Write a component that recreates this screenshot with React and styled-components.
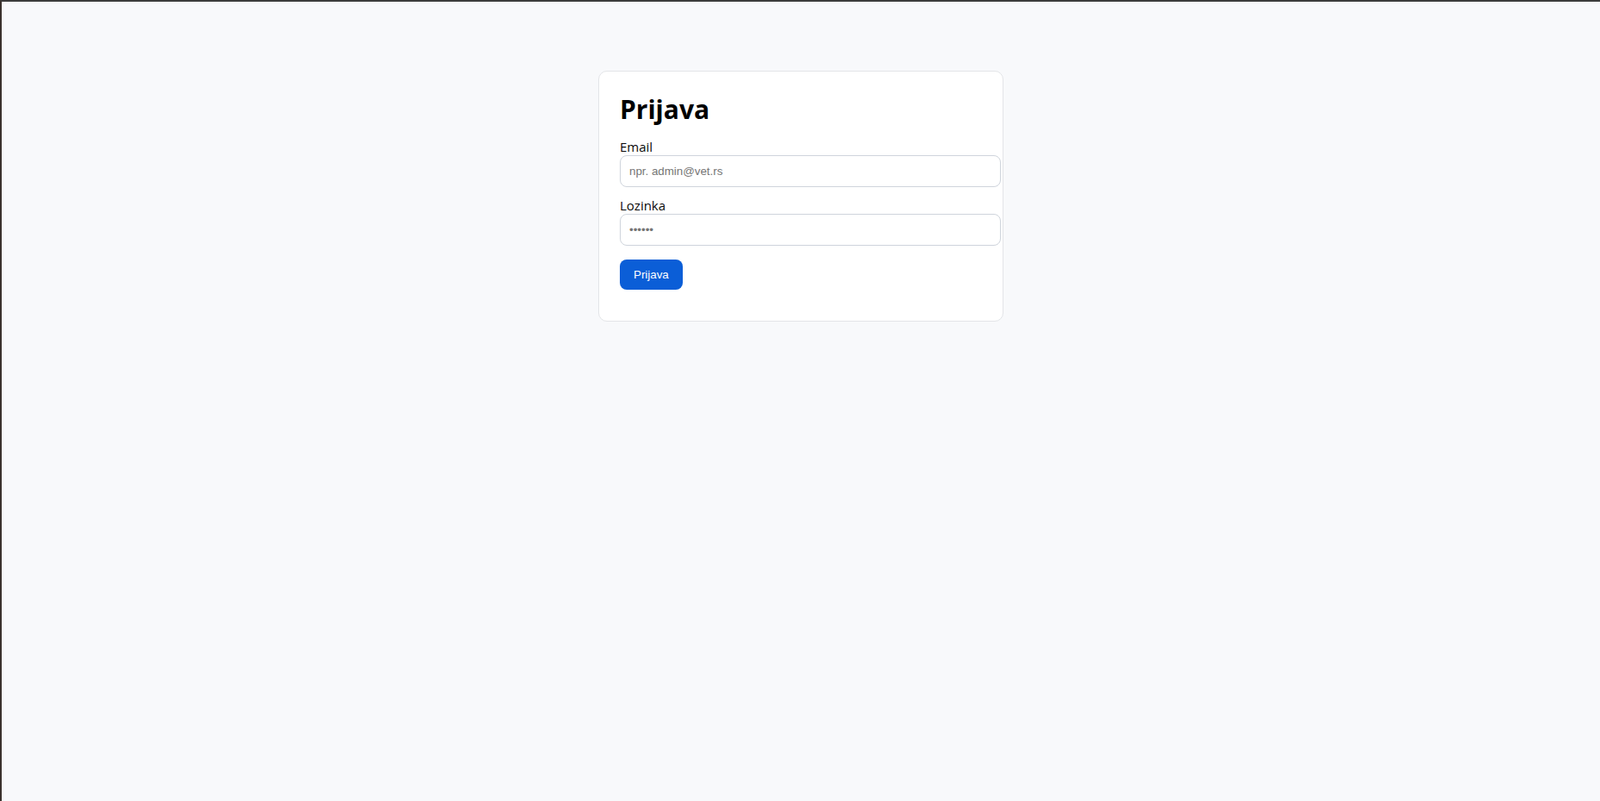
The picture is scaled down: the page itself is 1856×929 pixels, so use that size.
import React from 'react'
import styled, { createGlobalStyle } from 'styled-components'

const GlobalStyle = createGlobalStyle`
  html, body {
    margin: 0;
    padding: 0;
  }

  body {
    min-height: 100vh;
    box-sizing: border-box;
    background-color: #f8f9fb;
    border-top: 2px solid #3c3c3c;
    border-left: 2px solid #3a322d;
    font-family: "Open Sans", "Noto Sans", sans-serif;
    color: #0a0a0a;
  }
`

const Page = styled.main`
  padding-top: 80px;
  display: flex;
  justify-content: center;
`

const Card = styled.div`
  width: 470px;
  box-sizing: border-box;
  padding: 25px 24px 24px;
  background-color: #fff;
  border: 1px solid #e3e5e8;
  border-radius: 10px;
`

const Title = styled.h1`
  margin: 0 0 14px;
  font-size: 30px;
  line-height: 38px;
  font-weight: 700;
  color: #000;
`

const Field = styled.div`
  margin-bottom: ${props => props.last ? '16px' : '11px'};
`

const Label = styled.label`
  display: block;
  font-size: 15px;
  line-height: 20px;
  color: #0a0a0a;
`

const Input = styled.input`
  display: block;
  width: 100%;
  padding: 10px;
  margin: 0;
  border: 1px solid #cfd4dc;
  border-radius: 8px;
  font-family: "Liberation Sans", Arial, sans-serif;
  font-size: 13.333px;
  line-height: 15px;
  background-color: #fff;
  outline: none;

  ::placeholder {
    color: #757575;
  }
`

const Button = styled.button`
  display: block;
  margin: 0 0 12px;
  padding: 10px 16px;
  border: 0;
  border-radius: 8px;
  background-color: #0b5ed7;
  color: #fff;
  font-family: "Liberation Sans", Arial, sans-serif;
  font-size: 13.333px;
  line-height: 15px;
  cursor: pointer;
`

const App = () => {
  return (
    <>
      <GlobalStyle />
      <Page>
        <Card>
          <Title>Prijava</Title>
          <form onSubmit={e => e.preventDefault()}>
            <Field>
              <Label htmlFor="email">Email</Label>
              <Input id="email" type="email" placeholder="npr. admin@vet.rs" />
            </Field>
            <Field last>
              <Label htmlFor="password">Lozinka</Label>
              <Input id="password" type="password" placeholder="••••••" />
            </Field>
            <Button type="submit">Prijava</Button>
          </form>
        </Card>
      </Page>
    </>
  )
}

export default App
